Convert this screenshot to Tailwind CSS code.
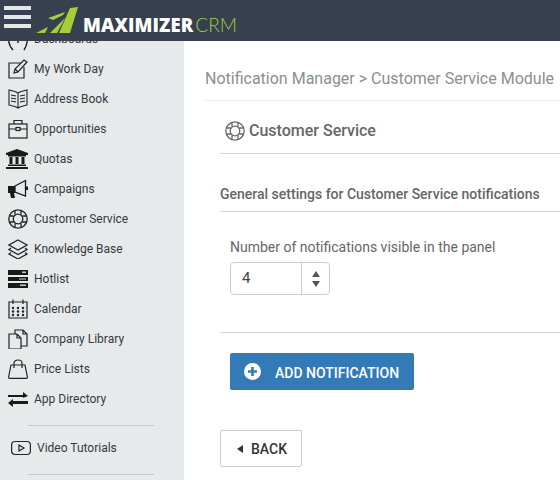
<!DOCTYPE html>
<html>
<head>
<meta charset="utf-8">
<script src="https://cdn.jsdelivr.net/npm/@tailwindcss/browser@4"></script>
</head>
<body class="w-[560px] h-[480px] overflow-hidden bg-white font-['Roboto',sans-serif]">
<!-- top bar -->
<header class="relative z-10 h-[41px] bg-[#36404f] flex items-start">
  <div class="w-[27px] ml-[4px] mt-[6px] flex flex-col gap-[5px]">
    <div class="h-[4px] bg-[#e4e6e8]"></div>
    <div class="h-[4px] bg-[#e4e6e8]"></div>
    <div class="h-[4px] bg-[#e4e6e8]"></div>
  </div>
  <svg class="ml-[5px] mt-[7px]" width="43" height="27" viewBox="0 0 43 27">
    <path d="M34 1 L42 0 L34 26 L23 26 Z M29 11 L14 26 L21 26 L26 17 Z M0 26 L12 20 L9 26 Z M12 11 L29 5 L27 8 L17 13 Z" fill="#a6ce39"/>
  </svg>
  <div class="ml-[5px] mt-[13px] flex items-baseline leading-[24px]">
    <span class="text-[18.5px] font-extrabold text-white font-['Open_Sans',sans-serif] tracking-[0.1px] -ml-[1px]">MAXIMIZER</span>
    <span class="ml-[2px] text-[19px] font-light text-[#a6ce39] font-['Lato',sans-serif]">CRM</span>
  </div>
</header>

<div class="flex h-[439px]">
  <!-- sidebar -->
  <nav class="w-[184px] shrink-0 bg-[#e7eaeb] overflow-hidden text-[12px] text-[#333b40]">
    <ul class="-mt-[17px]">
      <li class="h-[30px] flex items-center gap-[6px] pl-[8px]">
        <svg class="w-[20px] h-[20px] overflow-visible" viewBox="0 0 20 20" fill="none" stroke="#222" stroke-width="1.4"><path d="M0.5 11 C1 15 3 19 5 21 M19.5 11 C19 15 18 18 16 21"/><circle cx="10" cy="13" r="1" fill="#222" stroke="none"/></svg>
        <span>Dashboards</span>
      </li>
      <li class="h-[30px] flex items-center gap-[6px] pl-[8px]">
        <svg class="w-[20px] h-[20px]" viewBox="0 0 20 20" fill="none" stroke="#222" stroke-width="1.2"><path d="M13 4 H1 V19 H16 V8"/><path d="M6 14 L7 10 L16 1 L19 3 L10 13 Z"/><path d="M7 10 L10 13"/></svg>
        <span>My Work Day</span>
      </li>
      <li class="h-[30px] flex items-center gap-[6px] pl-[8px]">
        <svg class="w-[20px] h-[20px]" viewBox="0 0 20 20" fill="none" stroke="#222" stroke-width="1.1"><path d="M10 4 C7 2 4 2 1 1 V16 C4 17 7 17 10 19 C13 17 16 17 19 16 V1 C16 2 13 2 10 4 Z M10 4 V19"/><path d="M3 6 L8 7 M3 9 L8 10 M3 12 L8 13 M17 6 L12 7 M17 9 L12 10 M17 12 L12 13"/></svg>
        <span>Address Book</span>
      </li>
      <li class="h-[30px] flex items-center gap-[6px] pl-[8px]">
        <svg class="w-[20px] h-[20px]" viewBox="0 0 20 20" fill="none" stroke="#222" stroke-width="1.2"><rect x="1" y="5" width="18" height="14"/><path d="M6 5 V1.5 H14 V5 M1 10 H8 M12 10 H19"/><rect x="8" y="8.5" width="4" height="3"/></svg>
        <span>Opportunities</span>
      </li>
      <li class="h-[30px] flex items-center gap-[6px] pl-[6px]">
        <svg class="w-[22px] h-[20px]" viewBox="0 0 22 20" fill="#1a1a1a"><path d="M11 0 L22 4 V6 H0 V4 Z"/><rect x="2" y="6" width="18" height="1.5"/><rect x="3.5" y="8" width="3" height="7"/><rect x="9.5" y="8" width="3" height="7"/><rect x="15.5" y="8" width="3" height="7"/><rect x="2" y="15.5" width="18" height="1.5"/><rect x="0" y="18" width="22" height="2"/></svg>
        <span>Quotas</span>
      </li>
      <li class="h-[30px] flex items-center gap-[6px] pl-[8px]">
        <svg class="w-[20px] h-[20px]" viewBox="0 0 20 20"><path d="M0 7 H7 V14 H6 L7 19 H3 L2 14 H0 Z" fill="#1a1a1a"/><path d="M7 7 L17.5 1.5 V17 L7 13 Z" fill="none" stroke="#1a1a1a" stroke-width="1.3"/><path d="M18 7.5 H20 V11 H18 Z" fill="#1a1a1a"/></svg>
        <span>Campaigns</span>
      </li>
      <li class="h-[30px] flex items-center gap-[6px] pl-[8px]">
        <svg class="w-[20px] h-[20px]" viewBox="0 0 20 20" fill="none" stroke="#222" stroke-width="1.3"><circle cx="10" cy="10" r="9.2"/><circle cx="10" cy="10" r="4.8"/><path d="M7 1.5 V5.8 M13 1.5 V5.8 M7 18.5 V14.2 M13 18.5 V14.2 M1.5 7 H5.8 M1.5 13 H5.8 M18.5 7 H14.2 M18.5 13 H14.2"/></svg>
        <span>Customer Service</span>
      </li>
      <li class="h-[30px] flex items-center gap-[6px] pl-[8px]">
        <svg class="w-[20px] h-[20px]" viewBox="0 0 20 20" fill="none" stroke="#222" stroke-width="1.2"><path d="M10 1 L19 6 L10 11 L1 6 Z"/><path d="M3 9 L1 10.5 L10 15.5 L19 10.5 L17 9"/><path d="M3 13.5 L1 15 L10 20 L19 15 L17 13.5"/></svg>
        <span>Knowledge Base</span>
      </li>
      <li class="h-[30px] flex items-center gap-[6px] pl-[8px]">
        <svg class="w-[20px] h-[20px]" viewBox="0 0 20 20"><rect y="1" width="20" height="5" fill="#1a1a1a"/><rect y="8" width="20" height="4" fill="#1a1a1a"/><rect y="14" width="20" height="5" fill="#1a1a1a"/><rect x="14" y="2.5" width="4" height="1.5" fill="#c8ccce"/><rect x="11" y="9.5" width="7" height="1" fill="#c8ccce"/><rect x="12" y="15.5" width="6" height="1.5" fill="#c8ccce"/></svg>
        <span>Hotlist</span>
      </li>
      <li class="h-[30px] flex items-center gap-[6px] pl-[8px]">
        <svg class="w-[20px] h-[20px]" viewBox="0 0 20 20" fill="none" stroke="#222" stroke-width="1.2"><path d="M1 3 H19 V19 H1 Z M5 0.5 V5 M15 0.5 V5"/><g fill="#222" stroke="none"><circle cx="5" cy="9" r="1.2"/><circle cx="10" cy="9" r="1.2"/><circle cx="15" cy="9" r="1.2"/><circle cx="5" cy="12.5" r="1.2"/><circle cx="10" cy="12.5" r="1.2"/><circle cx="15" cy="12.5" r="1.2"/><circle cx="10" cy="16" r="1.2"/><circle cx="5" cy="16" r="1.2"/><circle cx="15" cy="16" r="1.2"/></g></svg>
        <span>Calendar</span>
      </li>
      <li class="h-[30px] flex items-center gap-[6px] pl-[8px]">
        <svg class="w-[20px] h-[20px]" viewBox="0 0 20 20" fill="none" stroke="#222" stroke-width="1.2"><path d="M1 5 H9 L13 9 V20 H1 Z M9 5 V9 H13"/><path d="M7 5 V1 H15 L19 5 V17 H13 M15 1 V5 H19"/></svg>
        <span>Company Library</span>
      </li>
      <li class="h-[30px] flex items-center gap-[6px] pl-[8px]">
        <svg class="w-[20px] h-[20px]" viewBox="0 0 20 20" fill="none" stroke="#222" stroke-width="1.2"><path d="M3 6 H17 L19.4 18 Q19.5 19.4 18 19.4 H2 Q0.5 19.4 0.6 18 Z"/><path d="M6 9 V4 C6 0 14 0 14 4 V9"/></svg>
        <span>Price Lists</span>
      </li>
      <li class="h-[30px] flex items-center gap-[6px] pl-[8px]">
        <svg class="w-[20px] h-[20px]" viewBox="0 0 20 20" fill="#1a1a1a"><path d="M0 6 H15 V3 L20 7 L15 9 V8 H0 Z"/><path d="M20 12 H5 V10 L0 14 L5 18 V15 H20 Z"/></svg>
        <span>App Directory</span>
      </li>
    </ul>
    <div class="w-[126px] h-px bg-[#c4c8ca] ml-[28px] mt-[11px]"></div>
    <div class="h-[30px] mt-[7px] flex items-center gap-[6px] pl-[11px]">
      <svg class="w-[20px] h-[20px]" viewBox="0 0 20 20" fill="none" stroke="#222" stroke-width="1.2"><rect x="0.6" y="3.5" width="18.8" height="13" rx="3.5"/><path d="M8 7 L13 10 L8 13 Z"/></svg>
      <span>Video Tutorials</span>
    </div>
    <div class="w-[126px] h-px bg-[#c4c8ca] ml-[28px] mt-[11px]"></div>
  </nav>

  <!-- main -->
  <main class="flex-1 min-w-0 pl-[21px] overflow-hidden">
    <h1 class="h-[60px] border-b border-[#e8ecef] pt-[27px] text-[16px] leading-[22px] text-[#8a8f92] whitespace-nowrap">Notification Manager &gt; Customer Service Module</h1>
    <div class="pl-[15px]">
      <div class="h-[53px] border-b border-[#d2d4d6] flex items-center pl-[5px] pt-[8px] gap-[4px]">
        <svg class="w-[20px] h-[20px] -mt-[1px]" viewBox="0 0 20 20" fill="none" stroke="#666" stroke-width="1.3"><circle cx="10" cy="10" r="9.2"/><circle cx="10" cy="10" r="4.8"/><path d="M7 1.5 V5.8 M13 1.5 V5.8 M7 18.5 V14.2 M13 18.5 V14.2 M1.5 7 H5.8 M1.5 13 H5.8 M18.5 7 H14.2 M18.5 13 H14.2"/></svg>
        <span class="text-[16px] font-medium text-[#666]">Customer Service</span>
      </div>
      <div class="h-[58px] border-b border-[#d2d4d6] pt-[31px] text-[14px] leading-[18px] font-medium text-[#666] whitespace-nowrap">General settings for Customer Service notifications</div>
      <div class="pl-[10px] h-[121px] border-b border-[#d2d4d6]">
        <label class="block pt-[25px] text-[14px] leading-[20px] text-[#666]">Number of notifications visible in the panel</label>
        <div class="mt-[5px] w-[100px] h-[33px] border border-[#ccc] rounded-[4px] flex">
          <div class="w-[71px] border-r border-[#ccc] pl-[11px] text-[15px] leading-[31px] text-[#444]">4</div>
          <div class="flex-1 flex flex-col items-center justify-center gap-[4px]">
            <div class="w-0 h-0 border-x-[4px] border-x-transparent border-b-[6px] border-b-[#555]"></div>
            <div class="w-0 h-0 border-x-[4px] border-x-transparent border-t-[6px] border-t-[#555]"></div>
          </div>
        </div>
      </div>
      <div class="pl-[10px] pt-[20px]">
        <button class="w-[184px] h-[37px] bg-[#337ab7] rounded-[2px] flex items-center pl-[14px] gap-[14px] text-[14px] font-medium text-white">
          <svg class="w-[17px] h-[17px]" viewBox="0 0 17 17"><circle cx="8.5" cy="8.5" r="8.5" fill="#fff"/><path d="M8.5 4 V13 M4 8.5 H13" stroke="#337ab7" stroke-width="2.6"/></svg>
          <span class="pt-[3px]">ADD NOTIFICATION</span>
        </button>
      </div>
      <button class="mt-[40px] w-[82px] h-[37px] border border-[#ccc] rounded-[2px] flex items-center pl-[16px] gap-[8px] text-[14px] font-medium text-[#333]">
        <span class="w-0 h-0 border-y-[4px] border-y-transparent border-r-[6px] border-r-[#333]"></span>
        <span class="pt-[2px]">BACK</span>
      </button>
    </div>
  </main>
</div>
</body>
</html>
